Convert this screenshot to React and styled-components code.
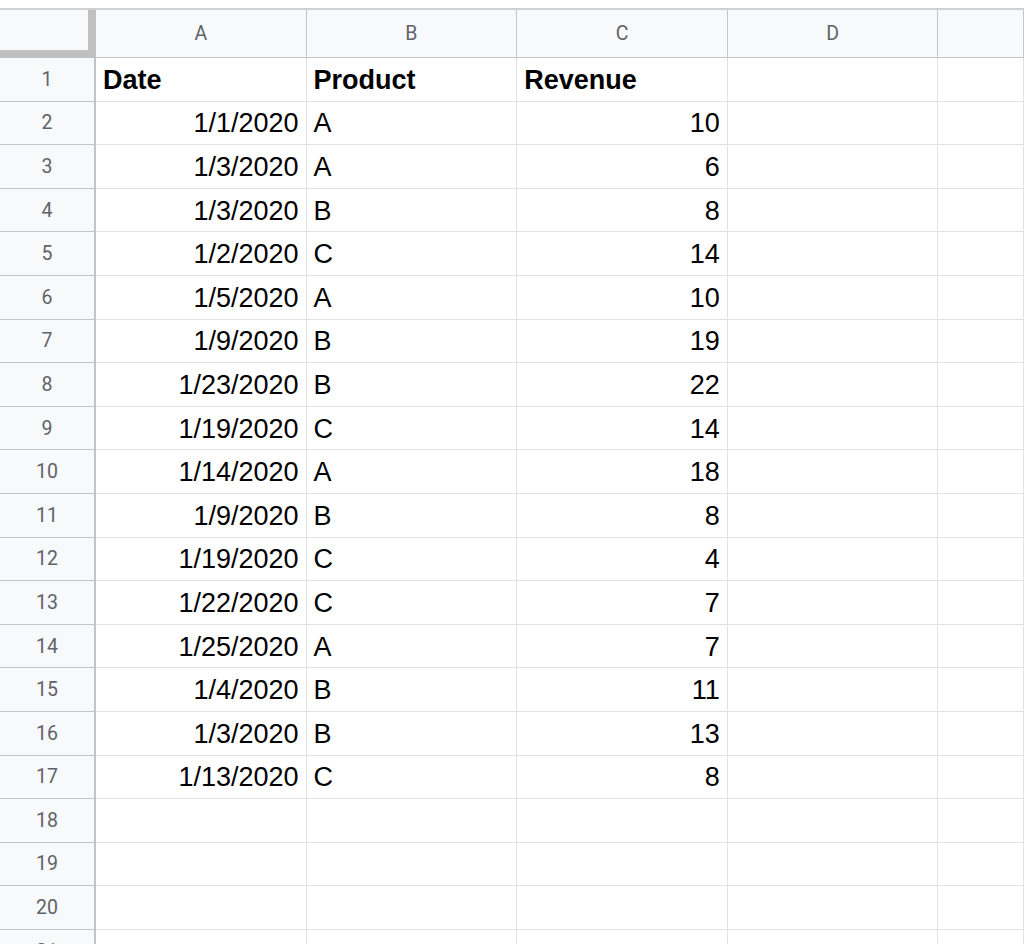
import React from "react";
import styled, { createGlobalStyle } from "styled-components";

const Global = createGlobalStyle`
  html, body { margin: 0; padding: 0; background: #fff; overflow: hidden; }
`;

const Page = styled.div`
  width: 1024px;
  height: 944px;
  overflow: hidden;
  padding-top: 8px;
  box-sizing: border-box;
`;

const Sheet = styled.div`
  display: grid;
  grid-template-columns: 96px 210.6px 210.6px 210.6px 210.6px 1fr;
  grid-template-rows: 48px repeat(21, 43.6px);
  border-top: 2px solid #d0d0d0;
`;

const Corner = styled.div`
  background: #f8f9fa;
  border-right: 8px solid #c0c0c0;
  border-bottom: 8px solid #c0c0c0;
  box-sizing: border-box;
`;

const Head = styled.div`
  background: #f8f9fa;
  border-right: ${(p) => (p.$row ? "2px" : "1px")} solid #c4c4c4;
  border-bottom: 1px solid #c4c4c4;
  box-sizing: border-box;
  display: flex;
  align-items: center;
  justify-content: center;
  font-family: Roboto, "Liberation Sans", sans-serif;
  font-size: 19.5px;
  color: #5f6368;
`;

const Cell = styled.div`
  border-right: 1px solid #e2e2e2;
  border-bottom: 1px solid #e2e2e2;
  box-sizing: border-box;
  display: flex;
  align-items: center;
  justify-content: ${(p) => (p.$right ? "flex-end" : "flex-start")};
  padding: 2px 7px 0 7px;
  font-family: "Liberation Sans", Arial, sans-serif;
  font-size: 27px;
  font-weight: ${(p) => (p.$bold ? 700 : 400)};
  color: #000;
  white-space: nowrap;
  overflow: hidden;
`;

const data = [
  ["1/1/2020", "A", 10], ["1/3/2020", "A", 6], ["1/3/2020", "B", 8],
  ["1/2/2020", "C", 14], ["1/5/2020", "A", 10], ["1/9/2020", "B", 19],
  ["1/23/2020", "B", 22], ["1/19/2020", "C", 14], ["1/14/2020", "A", 18],
  ["1/9/2020", "B", 8], ["1/19/2020", "C", 4], ["1/22/2020", "C", 7],
  ["1/25/2020", "A", 7], ["1/4/2020", "B", 11], ["1/3/2020", "B", 13],
  ["1/13/2020", "C", 8],
];

export default function App() {
  const rows = [];
  for (let r = 1; r <= 21; r++) {
    let cells;
    if (r === 1) cells = [["Date", false, true], ["Product", false, true], ["Revenue", false, true], ["", false], ["", false]];
    else if (r - 2 < data.length) {
      const d = data[r - 2];
      cells = [[d[0], true], [d[1], false], [String(d[2]), true], ["", false], ["", false]];
    } else cells = [["", false], ["", false], ["", false], ["", false], ["", false]];
    rows.push(
      <React.Fragment key={r}>
        <Head $row>{r}</Head>
        {cells.map((c, i) => (
          <Cell key={i} $right={c[1]} $bold={c[2]}>{c[0]}</Cell>
        ))}
      </React.Fragment>
    );
  }
  return (
    <>
      <Global />
      <Page>
        <Sheet>
          <Corner />
          {["A", "B", "C", "D", ""].map((h, i) => (
            <Head key={i}>{h}</Head>
          ))}
          {rows}
        </Sheet>
      </Page>
    </>
  );
}
